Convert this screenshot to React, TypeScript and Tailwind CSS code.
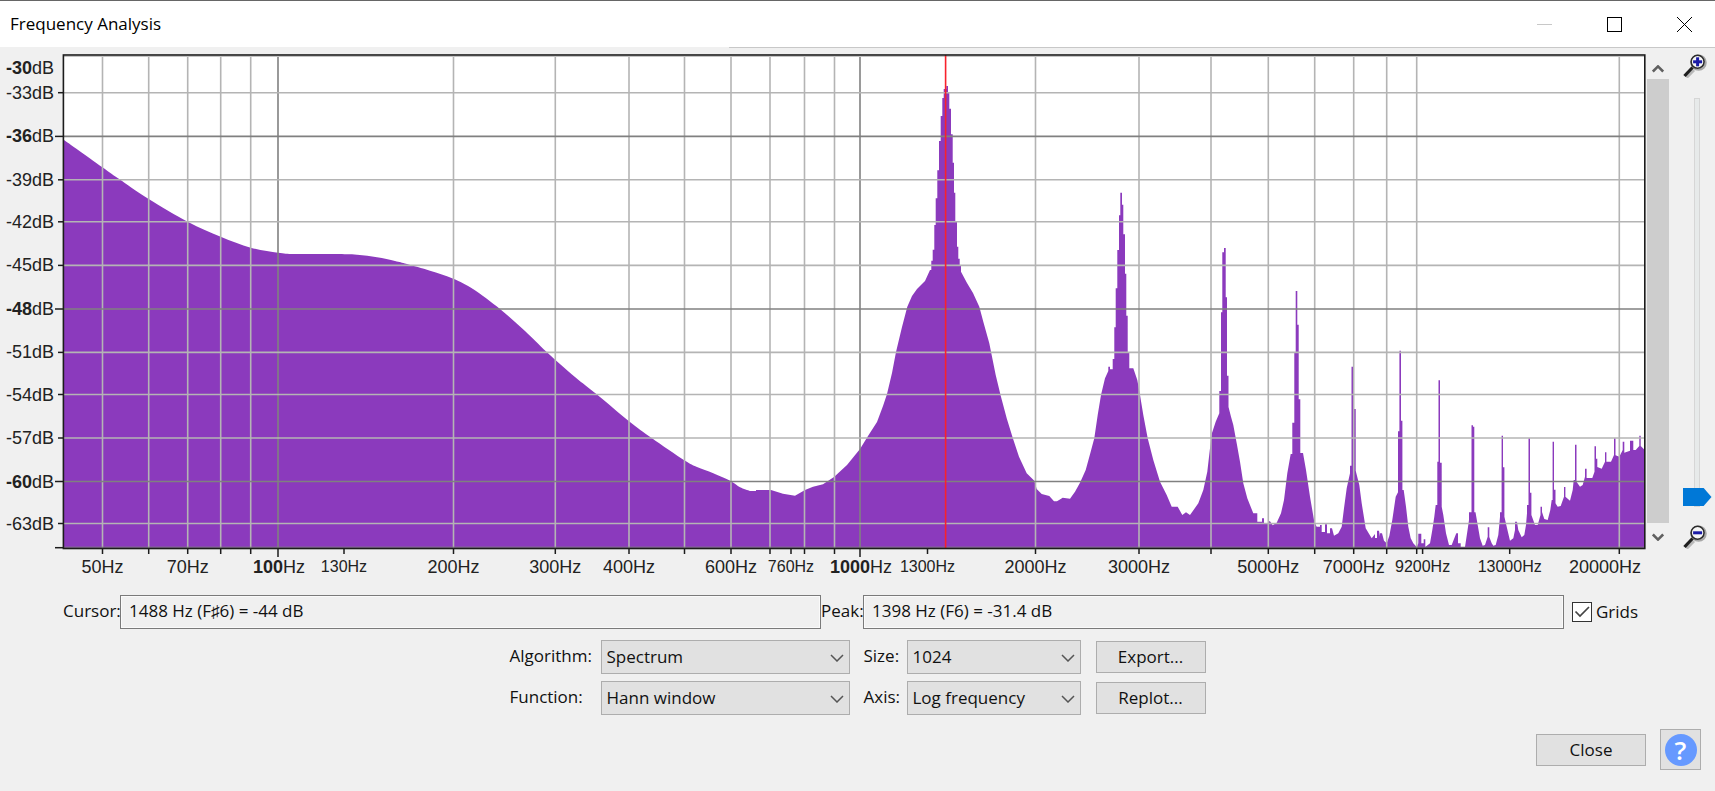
import React, { useState } from 'react';

const MAJOR = '#808080';
const MINOR = '#b4b4b4';

interface AxisMark {
  at: number;
  label?: string;
  labelAt?: number;
  major?: boolean;
  small?: boolean;
  grid?: boolean;
}

const FREQ_MARKS: AxisMark[] = [
  { at: 102.5, label: '50', grid: true },
  { at: 148.7, grid: true },
  { at: 187.7, label: '70', grid: true },
  { at: 220.7, grid: true },
  { at: 250.7, grid: true },
  { at: 278, label: '100', labelAt: 279, major: true, grid: true },
  { at: 344, label: '130', small: true },
  { at: 453.5, label: '200', grid: true },
  { at: 555.3, label: '300', grid: true },
  { at: 629, label: '400', grid: true },
  { at: 684.5, grid: true },
  { at: 731, label: '600', grid: true },
  { at: 770, grid: true },
  { at: 791, label: '760', small: true },
  { at: 804.5, grid: true },
  { at: 834.5, grid: true },
  { at: 860, label: '1000', labelAt: 861, major: true, grid: true },
  { at: 927.5, label: '1300', small: true },
  { at: 1035.5, label: '2000', grid: true },
  { at: 1139, label: '3000', grid: true },
  { at: 1211, grid: true },
  { at: 1268.3, label: '5000', grid: true },
  { at: 1314.7, grid: true },
  { at: 1353.7, label: '7000', grid: true },
  { at: 1386.7, grid: true },
  { at: 1416.7, grid: true },
  { at: 1422.6, label: '9200', small: true },
  { at: 1509.7, label: '13000', small: true },
  { at: 1619.3, label: '20000', labelAt: 1605, grid: true },
];

const DB_MARKS: AxisMark[] = [
  { at: 92.7, label: '-33' },
  { at: 136.4, label: '-36', major: true },
  { at: 179.8, label: '-39' },
  { at: 221.8, label: '-42' },
  { at: 265.4, label: '-45' },
  { at: 309, label: '-48', major: true },
  { at: 352.4, label: '-51' },
  { at: 394.5, label: '-54' },
  { at: 438, label: '-57' },
  { at: 481.5, label: '-60', major: true },
  { at: 523.5, label: '-63' },
];

type Point = [number, number];

// low end of the spectrum, where the curve has no steps
const LOW_END: Point[] = [
  [64, 140], [102, 167], [118, 178.3], [148.7, 199], [187.7, 221.7], [220.7, 236.7], [250.7, 247.7],
  [278, 252.7], [295, 254], [335, 254], [357, 254.7], [377, 257.3], [395, 261], [407, 264], [430, 270.7],
  [453.3, 278.7], [473, 289], [500, 309], [525, 331], [546.7, 352], [575, 377], [596.7, 394.3],
  [629, 421.3], [651.7, 438], [684.3, 460.3], [697, 467], [713.3, 473.3], [731, 481.3], [740, 487.3],
  [750, 491],
];

function smoothPath(points: Point[]) {
  return points.slice(1).reduce((d, p, i) => {
    const before = points[i - 1] ?? points[i];
    const from = points[i];
    const after = points[i + 2] ?? p;
    const c1 = [from[0] + (p[0] - before[0]) / 6, from[1] + (p[1] - before[1]) / 6];
    const c2 = [p[0] - (after[0] - from[0]) / 6, p[1] - (after[1] - from[1]) / 6];
    return `${d}C${c1.join(' ')} ${c2.join(' ')} ${p.join(' ')}`;
  }, `V${points[0][1]}`);
}

const SPECTRUM = [
  'M64 548',
  smoothPath(LOW_END),
  'H756V490H771L783 493.7L795 495.7L805 490L813 486.7L823 484.3L834 477L847 465L860 449L868 436L877 422L883 406L887 394L892 373L896 352L902 327L907.3 306.7L912 296L917 289L925 281L930 270',
  // fundamental
  'H931.3V260.7H932.7V249.7H934.3V225H935.7V198.3H937.3V170.3H939V141H940.7V116H942.3V98H943.7V89H946.3V86H948V93H949.3V108.7H951V134.3H952.7V162.7H954V192.7H955.3V222H957V246.7H958.3V258.7H959.7V265H961V271.7',
  'L967 283L973 293L979.3 306.7L983.3 321.7L989.3 343.3L995.7 375L1000.7 395.7L1006.7 418.3L1012.7 437.7L1019 456.7L1026.7 473.3L1034.3 480.7L1036.7 489L1041.7 494L1049.3 496L1054 501.3H1057L1062.7 497.7L1070 498.7',
  // second harmonic
  'L1075 491.7L1080 482.7L1085.7 470L1090.7 451.7L1094.3 438.3L1097.7 415L1101 395L1105 378.3L1108.3 371V366.7H1110V369.3H1112.7V359H1114.3V327.3H1115.7V288.3H1117.3V250H1119V215.3H1120.3V192.7H1122V204.7H1123.3V234.3H1125V273.7H1126.3V315.7H1127.7V352.3H1129.3V368.3H1133.3',
  'L1137.3 380L1140 395L1143.3 415L1147.7 438.3L1153.3 460L1160 481.7L1166.7 495L1171.7 506.7H1177.7L1182.3 515L1186 512.3L1190 515L1198.3 503.3L1203.3 490L1207.3 471.7L1209.7 450.7L1212 433L1215.7 421.7L1219.3 413.3',
  // third harmonic
  'V391H1221V312.3H1222.3V252.3H1224V248H1225.7V297.3H1227V375.7H1228.5V407L1231 416.7L1233.3 425L1236.7 443.3L1240 461.7L1243.3 483.3L1247.3 498.3L1253.3 513.3H1257.3V521.7H1262V518.3H1264V524H1268V521.3H1270L1272.7 525.3L1276.7 522.7L1281 513.3',
  // fourth harmonic
  'L1284 500L1287.3 473.3L1290.7 454H1292.3V422.7H1294.3V353H1295.7V291H1297.3V324.7H1298.7V399.3H1300.3V453H1303L1306 470L1310 496.7L1314.3 521.7L1316.7 526.7H1320V525H1321.7V532H1325V524.3H1327V533.3H1330V528.3H1332L1334 535.7L1338.3 533.3L1341.7 526.7',
  // fifth
  'L1344 508.3L1346.7 488.3L1350 473.3V465.7H1351.5V366.7H1353.2V465.7H1354V409H1355.7V470.7L1359.3 485L1361.7 503.3L1365.7 528.3L1371.7 538.3L1375 534V538H1377V530.7H1379L1380 536.7V533.3H1382L1384 540.7L1386.7 543.3',
  // sixth
  'L1389.3 536L1392.3 520L1395.7 496.7L1398 492.3V431.3H1399.4V350.7H1401V420.7H1402.4V490H1403.7L1406 506.7L1408.3 526.7L1410.7 538.3L1413.3 543.3L1416.7 547L1418.3 543.3V533.7H1421.3V543.3H1423.7V539.3H1425.3V547L1430 543.3',
  // seventh
  'L1432.3 530L1434.3 516.7L1435.7 505H1437.3V461.7H1438.5V380.3H1440V462.7H1441.7V506.7L1443.3 515L1446 533.3L1449 545H1451.7L1454.3 538.3L1456.3 533.3H1458V543.3H1460.7V547H1465',
  'L1467.3 531.7L1469 520V512.3H1471.5V425.3H1473V426.7H1474.3V512.3H1475.5L1477.7 525L1480 538.3L1482.7 545.7L1485 545L1487.7 536.7V527.3H1489.3V537L1491.7 543.3L1493.3 545.7L1495.7 545L1498.3 535',
  'L1500 516.7V512.3H1501.6V435.7H1503V467.3H1504.4V516.7L1506.7 526.7L1510 540.7L1513.3 538.3L1515 530V521.7H1517L1518.3 530L1521.7 537.3L1524.3 535L1526 525L1527 513.3V505H1528.5V438.3H1530V492.7H1531.4V515L1535 525H1537.7L1540.5 515',
  'V506.7H1542V512L1544.3 519L1547.7 520L1550.3 510L1551.7 500H1552.6V441.7H1554V489.7H1555.5V503.3L1557.7 506.7L1560.7 506L1564 496.7V487H1565.4V496.7L1570 500.7L1572.7 490L1573.7 480H1575V444.7H1576.5V481.7L1580 486.7L1582.7 485L1585 476.7V468.7H1586.6V478H1592.3',
  'L1594.5 471.7V446.3H1596V458.7H1597.3V467L1601.7 468.7L1605 461.7V452.3H1606.4V461.7H1611L1614 455V438.3H1615.5V455.3L1619.3 456.7L1622.7 450V441.7H1624.3V452.7L1630 450.7V440.7H1633.3V450H1635.7L1639.3 446V435.7H1640.7V446L1644 449.3V548Z',
].join('');

function SpectrumChart({ grids }: { grids: boolean }) {
  return (
    <svg
      viewBox="0 48 1646 532"
      className="block h-auto min-w-0 flex-1 font-['Liberation_Sans',Arial,sans-serif]"
      role="img"
      aria-label="Frequency spectrum"
    >
      <rect x="64" y="55" width="1581" height="494" fill="#fff" />
      <path d={SPECTRUM} fill="#8b3abd" />

      {grids && (
        <g strokeWidth="1.6">
          {FREQ_MARKS.filter((m) => m.grid).map((m) => (
            <line key={m.at} x1={m.at} x2={m.at} y1="56" y2="548" stroke={m.major ? MAJOR : MINOR} />
          ))}
          {DB_MARKS.map((m) => (
            <line key={m.at} x1="64" x2="1645" y1={m.at} y2={m.at} stroke={m.major ? MAJOR : MINOR} />
          ))}
          <line x1="64" x2="1645" y1="56.5" y2="56.5" stroke="#c4c4c4" strokeWidth="1" />
          <line x1="64" x2="1645" y1="547.2" y2="547.2" stroke={MAJOR} strokeWidth="1" />
        </g>
      )}

      <line x1="945.6" x2="945.6" y1="55" y2="548" stroke="#f8222c" strokeWidth="1.6" />
      <rect x="63.4" y="55" width="1581.4" height="493.5" fill="none" stroke="#1c1c1c" strokeWidth="1.6" />

      <g stroke="#1c1c1c" strokeWidth="1.5">
        {FREQ_MARKS.map((m) => (
          <line key={m.at} x1={m.at} x2={m.at} y1="549" y2={m.major ? 557 : 554} />
        ))}
        {DB_MARKS.map((m) => (
          <line key={m.at} x1={m.major ? 55 : 58} x2="63" y1={m.at} y2={m.at} />
        ))}
        <line x1="55" x2="63" y1="547.7" y2="547.7" />
      </g>

      <g fill="#222" fontSize="18" textAnchor="end">
        <text x="54" y="74">
          <tspan fontWeight="bold">-30</tspan>dB
        </text>
        {DB_MARKS.map((m) => (
          <text key={m.at} x="54" y={Math.round(m.at) + 6}>
            <tspan fontWeight={m.major ? 'bold' : 'normal'}>{m.label}</tspan>dB
          </text>
        ))}
      </g>

      <g fill="#222" textAnchor="middle">
        {FREQ_MARKS.filter((m) => m.label).map((m) => (
          <text key={m.at} x={m.labelAt ?? m.at} y={m.small ? 572 : 573} fontSize={m.small ? 16 : 18}>
            <tspan fontWeight={m.major ? 'bold' : 'normal'}>{m.label}</tspan>Hz
          </text>
        ))}
      </g>
    </svg>
  );
}

function ZoomGlass({ sign }: { sign: 'in' | 'out' }) {
  return (
    <svg viewBox="0 0 24 24" className="size-6" fill="none" aria-hidden="true">
      <path d="M3.5 23.5L11 16" stroke="#b9b9b9" strokeWidth="3" />
      <circle cx="15.6" cy="8.6" r="7.2" stroke="#a8a8a8" strokeWidth="2" />
      <path d="M1.5 22L9.5 13.5" stroke="#1e1e1e" strokeWidth="3.2" />
      <circle cx="14.6" cy="7.8" r="6.5" fill="#f6f6f6" stroke="#2c2c2c" strokeWidth="1.6" />
      <path d="M10.1 7.8H19.1" stroke="#1b1ba6" strokeWidth="3" />
      {sign === 'in' && <path d="M14.6 3.3V12.3" stroke="#1b1ba6" strokeWidth="3" />}
    </svg>
  );
}

function Chevron({ up = false, className = '' }: { up?: boolean; className?: string }) {
  return (
    <svg viewBox="0 0 14 8" className={className} fill="none" stroke="currentColor" aria-hidden="true">
      <path d={up ? 'M1 7L7 1L13 7' : 'M1 1L7 7L13 1'} />
    </svg>
  );
}

function Choice({ id, options }: { id: string; options: string[] }) {
  return (
    <div className="relative">
      <select
        id={id}
        className="block h-[34px] w-full appearance-none border border-[#adadad] bg-[#e1e1e1] pl-[5px] pr-8 text-[#111]"
      >
        {options.map((o) => (
          <option key={o}>{o}</option>
        ))}
      </select>
      <Chevron className="pointer-events-none absolute right-[6px] top-[14px] h-2 w-3.5 stroke-[1.5] text-[#555]" />
    </div>
  );
}

function PushButton({ children }: { children: React.ReactNode }) {
  return (
    <button type="button" className="h-8 w-[110px] border border-[#adadad] bg-[#e1e1e1] text-[#111] hover:bg-[#e5f1fb]">
      {children}
    </button>
  );
}

const FIELD =
  'h-[34px] min-w-0 flex-1 border border-[#7a7a7a] bg-[#f0f0f0] pl-2 pb-[3px] text-[#111] shadow-[inset_0_0_0_1px_#fafafa] outline-none';

export default function App() {
  const [grids, setGrids] = useState(true);
  const [zoom, setZoom] = useState(0);

  return (
    <div className="min-h-screen bg-[#f0f0f0] font-['Open_Sans','Noto_Sans',sans-serif] text-[17px] leading-6 text-[#111]">
      <header className="flex h-[47px] items-center justify-between border-t border-[#666] bg-white pl-[10px] pr-[23px]">
        <h1 className="text-black">Frequency Analysis</h1>
        <div className="flex gap-[55px]">
          <button type="button" aria-label="Minimize" className="flex size-[15px] items-center">
            <span className="block h-px w-full bg-[#c8c8c8]" />
          </button>
          <button type="button" aria-label="Maximize" className="size-[15px] border border-black" />
          <button type="button" aria-label="Close window" className="size-[15px]">
            <svg viewBox="0 0 15 15" className="size-[15px]" stroke="#000" aria-hidden="true">
              <path d="M0 0L15 15M15 0L0 15" />
            </svg>
          </button>
        </div>
      </header>
      <div className="ml-[42.5%] h-px bg-[#c8c8c8]" />

      <main>
        <div className="flex">
          <SpectrumChart grids={grids} />

          <div className="mb-[30px] ml-px mt-[6px] flex w-[22px] flex-col text-[#606060]">
            <button type="button" aria-label="Scroll up" className="flex h-[25px] items-center justify-center pt-1">
              <Chevron up className="h-2 w-3 stroke-[3]" />
            </button>
            <div className="flex-1 bg-[#cdcdcd]" />
            <button type="button" aria-label="Scroll down" className="flex h-[27px] items-center justify-center">
              <Chevron className="h-2 w-3 stroke-[3]" />
            </button>
          </div>

          <div className="mb-[31px] ml-[14px] mt-[6px] flex w-8 flex-col items-start">
            <ZoomGlass sign="in" />
            <input
              type="range"
              aria-label="Vertical zoom"
              min={0}
              max={100}
              value={zoom}
              onChange={(e) => setZoom(Number(e.target.value))}
              className="mb-[18px] ml-[11px] mt-5 min-h-0 w-[6px] flex-1 appearance-none border border-[#d6d6d6] bg-[#e7eaea] [direction:rtl] [writing-mode:vertical-lr] [&::-webkit-slider-thumb]:h-[18px] [&::-webkit-slider-thumb]:w-[29px] [&::-webkit-slider-thumb]:appearance-none [&::-webkit-slider-thumb]:bg-[#0078d7] [&::-webkit-slider-thumb]:[clip-path:polygon(0_0,73%_0,100%_50%,73%_100%,0_100%)]"
            />
            <ZoomGlass sign="out" />
          </div>
        </div>

        <div className="mt-[15px] flex items-center pl-[63px] pr-[76px]">
          <label htmlFor="cursor" className="w-[57px] pb-[3px]">Cursor:</label>
          <input id="cursor" readOnly value="1488 Hz (F♯6) = -44 dB" className={FIELD} />
          <label htmlFor="peak" className="w-[42px] pb-[3px]">Peak:</label>
          <input id="peak" readOnly value="1398 Hz (F6) = -31.4 dB" className={FIELD} />
          <label className="flex w-[75px] items-center gap-1 pl-2">
            <span className="relative size-5 shrink-0">
              <input
                type="checkbox"
                checked={grids}
                onChange={(e) => setGrids(e.target.checked)}
                className="block size-5 appearance-none border border-[#333] bg-white"
              />
              {grids && (
                <svg viewBox="0 0 20 20" className="pointer-events-none absolute inset-0" fill="none" stroke="#444" strokeWidth="1.7" aria-hidden="true">
                  <path d="M3.5 9.5L8 14L17 5" />
                </svg>
              )}
            </span>
            Grids
          </label>
        </div>

        <div className="mt-[11px] grid grid-cols-[91px_249px_57px_174px_125px] items-center justify-center gap-y-[7px]">
          <label htmlFor="algorithm" className="pb-[2px]">Algorithm:</label>
          <Choice id="algorithm" options={['Spectrum', 'Autocorrelation', 'Cepstrum']} />
          <label htmlFor="size" className="pb-[2px] pl-[14px]">Size:</label>
          <Choice id="size" options={['1024', '2048', '4096']} />
          <div className="flex justify-end">
            <PushButton>Export...</PushButton>
          </div>

          <label htmlFor="function" className="pb-[2px]">Function:</label>
          <Choice id="function" options={['Hann window', 'Hamming window', 'Rectangular window']} />
          <label htmlFor="axis" className="pb-[2px] pl-[14px]">Axis:</label>
          <Choice id="axis" options={['Log frequency', 'Linear frequency']} />
          <div className="flex justify-end">
            <PushButton>Replot...</PushButton>
          </div>
        </div>

        <div className="mt-[14px] flex items-center justify-end gap-[14px] pr-[14px]">
          <PushButton>Close</PushButton>
          <button
            type="button"
            aria-label="Help"
            className="flex size-[41px] items-center justify-center border border-[#adadad] bg-[#e1e1e1]"
          >
            <span className="flex size-8 items-center justify-center rounded-full bg-[#6699ff] text-[26px] font-semibold leading-8 text-white">?</span>
          </button>
        </div>
      </main>
    </div>
  );
}
